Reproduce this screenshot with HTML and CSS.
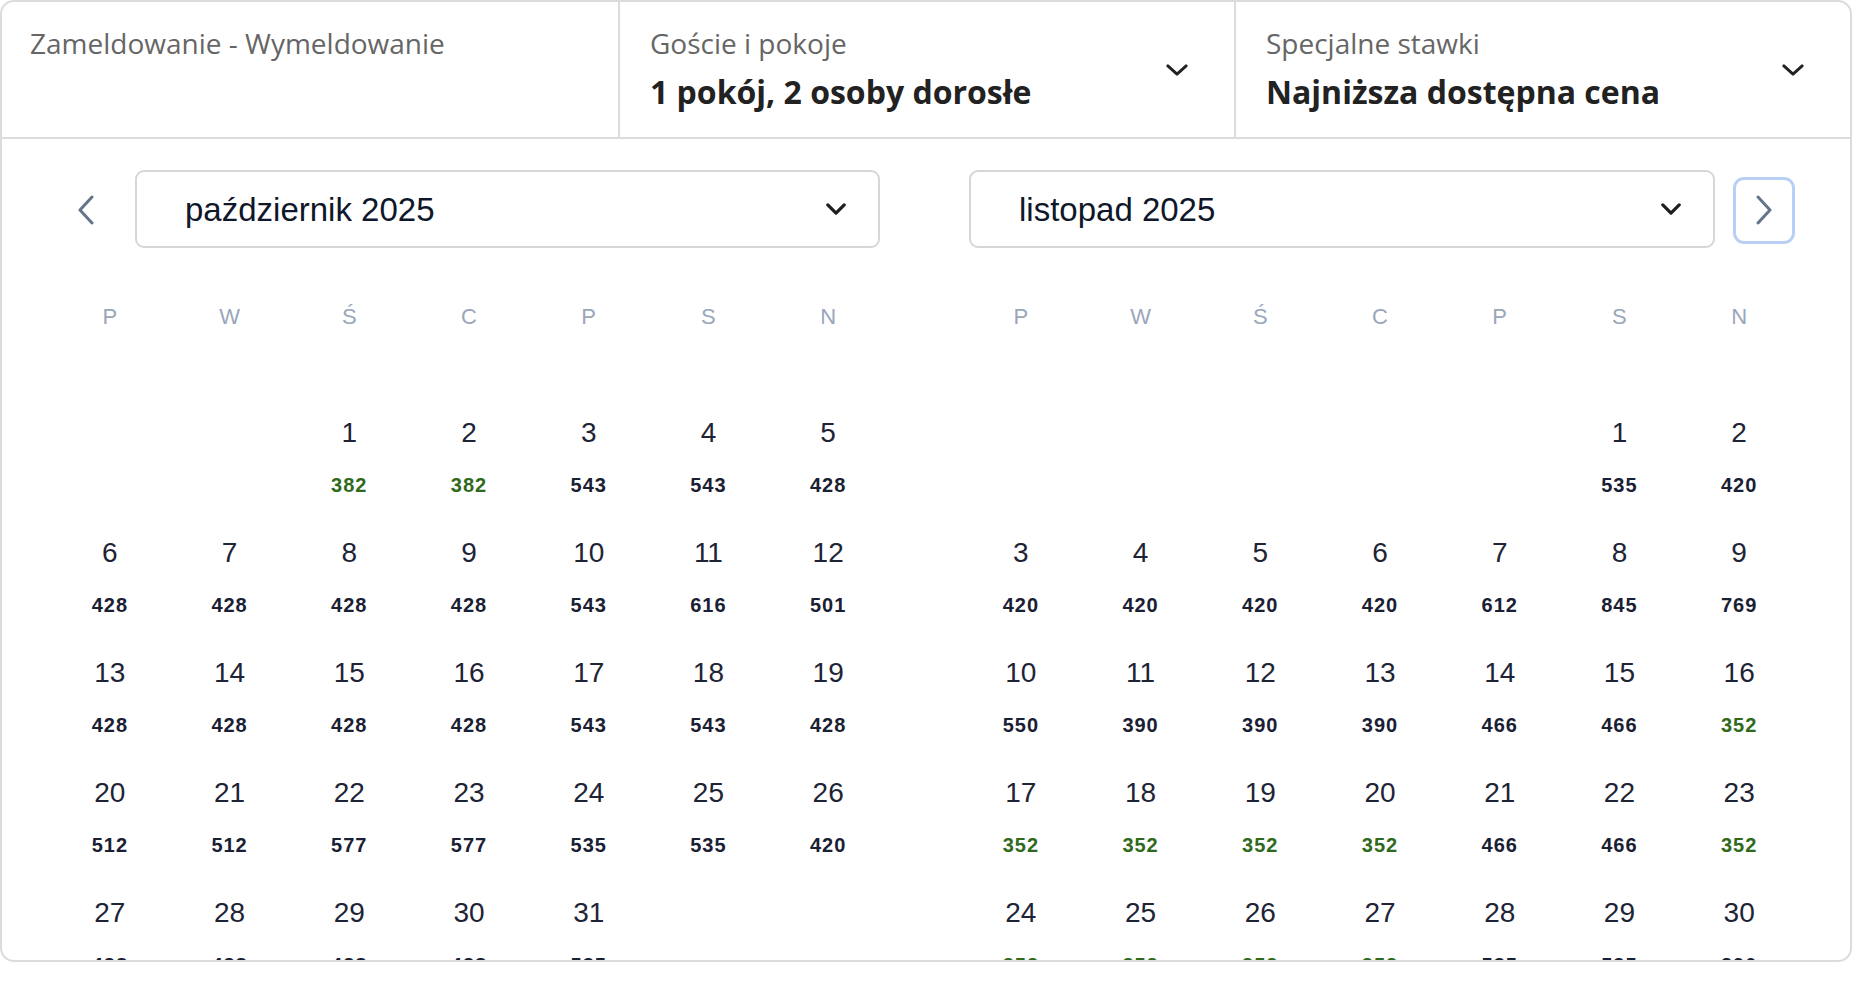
FILE: index.html
```html
<!DOCTYPE html>
<html lang="pl">
<head>
<meta charset="utf-8">
<title>Kalendarz</title>
<link rel="stylesheet" href="styles.css">
</head>
<body>
<div class="widget">
  <div class="topbar">
    <div class="field">
      <div class="field-text">
        <div class="label">Zameldowanie - Wymeldowanie</div>
      </div>
    </div>
    <div class="field">
      <div class="field-text">
        <div class="label">Goście i pokoje</div>
        <div class="value">1 pokój, 2 osoby dorosłe</div>
      </div>
      <svg class="field-chev" viewBox="0 0 24 14"><path d="M2 2 L12 11 L22 2" /></svg>
    </div>
    <div class="field">
      <div class="field-text">
        <div class="label">Specjalne stawki</div>
        <div class="value">Najniższa dostępna cena</div>
      </div>
      <svg class="field-chev" viewBox="0 0 24 14"><path d="M2 2 L12 11 L22 2" /></svg>
    </div>
  </div>

  <div class="months">
    <div class="month">
      <div class="month-head">
        <button class="nav nav-prev" type="button">
          <svg viewBox="0 0 18 30"><path d="M15 2 L3 15 L15 28" /></svg>
        </button>
        <div class="month-select">
          <span>październik 2025</span>
          <svg class="sel-chev" viewBox="0 0 22 14"><path d="M2 2 L11 11 L20 2" /></svg>
        </div>
      </div>
      <div class="weekdays">
        <span>P</span><span>W</span><span>Ś</span><span>C</span><span>P</span><span>S</span><span>N</span>
      </div>
      <div class="days">
        <div class="day empty"></div><div class="day empty"></div>
        <div class="day"><span class="num">1</span><span class="price low">382</span></div>
        <div class="day"><span class="num">2</span><span class="price low">382</span></div>
        <div class="day"><span class="num">3</span><span class="price">543</span></div>
        <div class="day"><span class="num">4</span><span class="price">543</span></div>
        <div class="day"><span class="num">5</span><span class="price">428</span></div>
        <div class="day"><span class="num">6</span><span class="price">428</span></div>
        <div class="day"><span class="num">7</span><span class="price">428</span></div>
        <div class="day"><span class="num">8</span><span class="price">428</span></div>
        <div class="day"><span class="num">9</span><span class="price">428</span></div>
        <div class="day"><span class="num">10</span><span class="price">543</span></div>
        <div class="day"><span class="num">11</span><span class="price">616</span></div>
        <div class="day"><span class="num">12</span><span class="price">501</span></div>
        <div class="day"><span class="num">13</span><span class="price">428</span></div>
        <div class="day"><span class="num">14</span><span class="price">428</span></div>
        <div class="day"><span class="num">15</span><span class="price">428</span></div>
        <div class="day"><span class="num">16</span><span class="price">428</span></div>
        <div class="day"><span class="num">17</span><span class="price">543</span></div>
        <div class="day"><span class="num">18</span><span class="price">543</span></div>
        <div class="day"><span class="num">19</span><span class="price">428</span></div>
        <div class="day"><span class="num">20</span><span class="price">512</span></div>
        <div class="day"><span class="num">21</span><span class="price">512</span></div>
        <div class="day"><span class="num">22</span><span class="price">577</span></div>
        <div class="day"><span class="num">23</span><span class="price">577</span></div>
        <div class="day"><span class="num">24</span><span class="price">535</span></div>
        <div class="day"><span class="num">25</span><span class="price">535</span></div>
        <div class="day"><span class="num">26</span><span class="price">420</span></div>
        <div class="day"><span class="num">27</span><span class="price">428</span></div>
        <div class="day"><span class="num">28</span><span class="price">428</span></div>
        <div class="day"><span class="num">29</span><span class="price">428</span></div>
        <div class="day"><span class="num">30</span><span class="price">428</span></div>
        <div class="day"><span class="num">31</span><span class="price">535</span></div>
      </div>
    </div>

    <div class="month">
      <div class="month-head">
        <div class="month-select">
          <span>listopad 2025</span>
          <svg class="sel-chev" viewBox="0 0 22 14"><path d="M2 2 L11 11 L20 2" /></svg>
        </div>
        <button class="nav nav-next" type="button">
          <svg viewBox="0 0 18 30"><path d="M3 2 L15 15 L3 28" /></svg>
        </button>
      </div>
      <div class="weekdays">
        <span>P</span><span>W</span><span>Ś</span><span>C</span><span>P</span><span>S</span><span>N</span>
      </div>
      <div class="days">
        <div class="day empty"></div><div class="day empty"></div><div class="day empty"></div>
        <div class="day empty"></div><div class="day empty"></div>
        <div class="day"><span class="num">1</span><span class="price">535</span></div>
        <div class="day"><span class="num">2</span><span class="price">420</span></div>
        <div class="day"><span class="num">3</span><span class="price">420</span></div>
        <div class="day"><span class="num">4</span><span class="price">420</span></div>
        <div class="day"><span class="num">5</span><span class="price">420</span></div>
        <div class="day"><span class="num">6</span><span class="price">420</span></div>
        <div class="day"><span class="num">7</span><span class="price">612</span></div>
        <div class="day"><span class="num">8</span><span class="price">845</span></div>
        <div class="day"><span class="num">9</span><span class="price">769</span></div>
        <div class="day"><span class="num">10</span><span class="price">550</span></div>
        <div class="day"><span class="num">11</span><span class="price">390</span></div>
        <div class="day"><span class="num">12</span><span class="price">390</span></div>
        <div class="day"><span class="num">13</span><span class="price">390</span></div>
        <div class="day"><span class="num">14</span><span class="price">466</span></div>
        <div class="day"><span class="num">15</span><span class="price">466</span></div>
        <div class="day"><span class="num">16</span><span class="price low">352</span></div>
        <div class="day"><span class="num">17</span><span class="price low">352</span></div>
        <div class="day"><span class="num">18</span><span class="price low">352</span></div>
        <div class="day"><span class="num">19</span><span class="price low">352</span></div>
        <div class="day"><span class="num">20</span><span class="price low">352</span></div>
        <div class="day"><span class="num">21</span><span class="price">466</span></div>
        <div class="day"><span class="num">22</span><span class="price">466</span></div>
        <div class="day"><span class="num">23</span><span class="price low">352</span></div>
        <div class="day"><span class="num">24</span><span class="price low">352</span></div>
        <div class="day"><span class="num">25</span><span class="price low">352</span></div>
        <div class="day"><span class="num">26</span><span class="price low">352</span></div>
        <div class="day"><span class="num">27</span><span class="price low">352</span></div>
        <div class="day"><span class="num">28</span><span class="price">535</span></div>
        <div class="day"><span class="num">29</span><span class="price">535</span></div>
        <div class="day"><span class="num">30</span><span class="price">390</span></div>
      </div>
    </div>
  </div>
</div>
</body>
</html>
```

FILE: styles.css
```css
* { box-sizing: border-box; }

html, body {
  margin: 0;
  padding: 0;
  background: #ffffff;
}

.widget {
  width: 1852px;
  height: 962px;
  border: 2px solid #dcdcdc;
  border-radius: 14px;
  overflow: hidden;
  background: #fff;
}

.topbar {
  display: grid;
  grid-template-columns: 1fr 1fr 1fr;
  height: 137px;
  border-bottom: 2px solid #dcdcdc;
}

.field {
  display: flex;
  align-items: center;
  padding: 0 46px 0 30px;
  border-left: 2px solid #dcdcdc;
}

.field:first-child {
  border-left: none;
  padding-left: 28px;
  align-items: flex-start;
}

.field-text {
  flex: 1;
  display: flex;
  flex-direction: column;
  gap: 8px;
  padding-top: 22px;
  align-self: flex-start;
}

.label {
  font-family: "Open Sans", sans-serif;
  font-size: 28px;
  line-height: 38px;
  color: #666666;
}

.value {
  font-family: "Open Sans", sans-serif;
  font-size: 32px;
  line-height: 44px;
  font-weight: 700;
  color: #222222;
}

.field-chev {
  width: 22px;
  height: 13px;
  fill: none;
  stroke: #222;
  stroke-width: 3.2;
  stroke-linecap: round;
  stroke-linejoin: round;
  margin-top: 2px;
}

.months {
  display: grid;
  grid-template-columns: 838px 838px;
  column-gap: 73px;
  padding: 31px 0 0 48px;
}

.month {
  display: flex;
  flex-direction: column;
}

.month-head {
  display: flex;
  align-items: center;
  gap: 18px;
  padding: 0 8px 0 5px;
  height: 78px;
}

.month:last-child .month-head {
  padding: 0 4px 0 8px;
}

.nav {
  width: 62px;
  height: 67px;
  flex: none;
  display: flex;
  align-items: center;
  justify-content: center;
  padding: 0;
  background: #fff;
  border: 3px solid transparent;
  border-radius: 11px;
  margin-top: 2px;
}

.nav-next {
  border-color: #b9cff5;
}

.nav svg {
  width: 18px;
  height: 30px;
  fill: none;
  stroke: #64748b;
  stroke-width: 3;
  stroke-linecap: round;
  stroke-linejoin: round;
}

.month-select {
  flex: 1;
  height: 78px;
  display: flex;
  align-items: center;
  justify-content: space-between;
  padding: 0 32px 0 48px;
  border: 2px solid #d6d6d6;
  border-radius: 9px;
  font-family: "Liberation Sans", Arial, sans-serif;
  font-size: 33px;
  color: #0f172a;
}

.month-select span {
  margin-top: 2px;
}

.sel-chev {
  width: 20px;
  height: 13px;
  fill: none;
  stroke: #1f1f1f;
  stroke-width: 3.6;
  stroke-linecap: round;
  stroke-linejoin: round;
}

.weekdays {
  display: grid;
  grid-template-columns: repeat(7, 1fr);
  margin-top: 49px;
  height: 40px;
  align-items: center;
  font-family: "Liberation Sans", Arial, sans-serif;
  font-size: 22px;
  color: #9aa6ba;
  text-align: center;
}

.days {
  display: grid;
  grid-template-columns: repeat(7, 1fr);
  grid-auto-rows: 120px;
  margin-top: 62px;
}

.day {
  display: flex;
  flex-direction: column;
  align-items: center;
  padding-top: 14px;
  gap: 20px;
  font-family: "Liberation Sans", Arial, sans-serif;
}

.num {
  font-size: 28px;
  line-height: 40px;
  color: #1e2436;
}

.price {
  font-size: 20px;
  line-height: 24px;
  font-weight: 700;
  letter-spacing: 1px;
  color: #1a2033;
}

.price.low {
  color: #2f6a1c;
}
```
